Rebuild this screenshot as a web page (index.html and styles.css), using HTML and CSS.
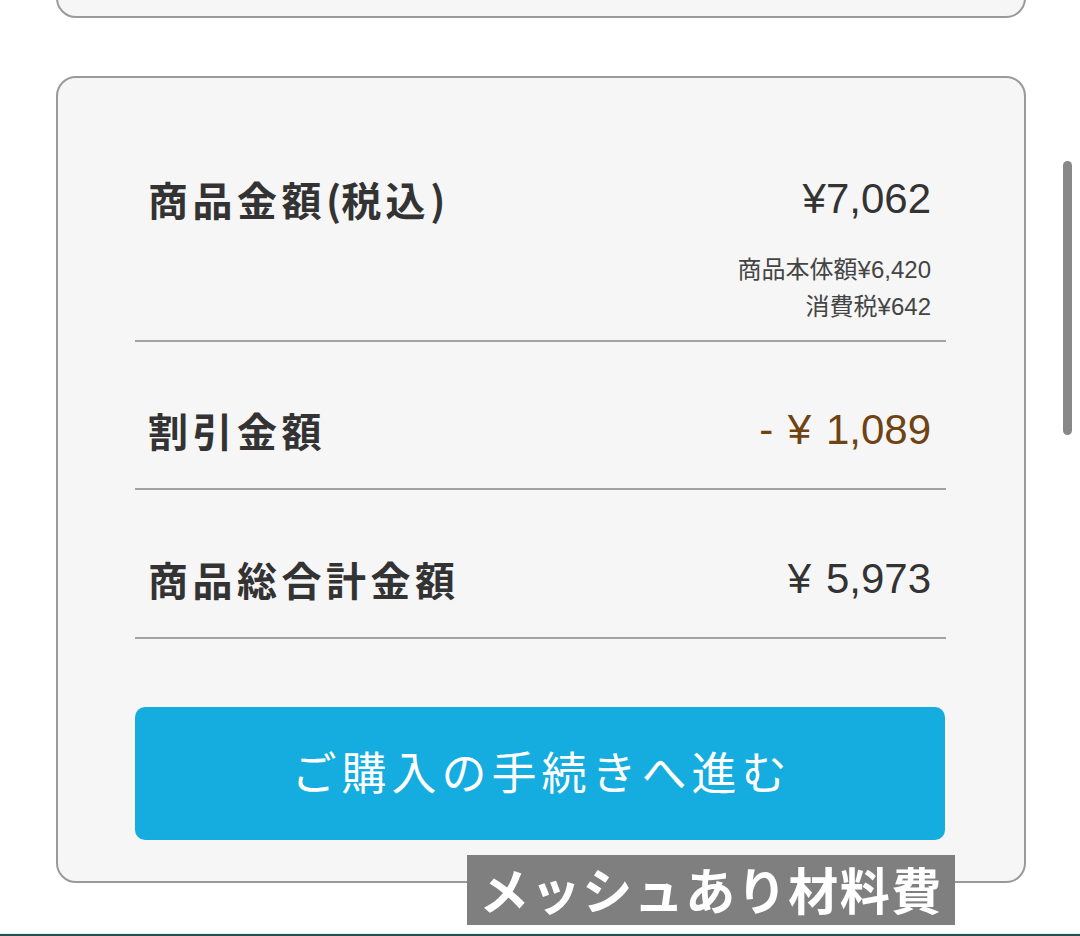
FILE: index.html
```html
<!DOCTYPE html>
<html lang="ja">
<head>
<meta charset="utf-8">
<link rel="stylesheet" href="styles.css">
</head>
<body>
<div class="page">
  <div class="card card-prev"></div>
  <div class="card summary">
    <div class="row row-first">
      <div class="line">
        <span class="label">商品金額<span class="paren">(</span>税込<span class="paren">)</span></span>
        <span class="value">¥7,062</span>
      </div>
      <div class="sub">
        <div>商品本体額¥6,420</div>
        <div>消費税¥642</div>
      </div>
    </div>
    <div class="row row-second">
      <div class="line">
        <span class="label">割引金額</span>
        <span class="value discount">- ¥ 1,089</span>
      </div>
    </div>
    <div class="row row-third">
      <div class="line">
        <span class="label">商品総合計金額</span>
        <span class="value">¥ 5,973</span>
      </div>
    </div>
    <button class="cta">ご購入の手続きへ進む</button>
  </div>
</div>
<div class="caption">メッシュあり材料費</div>
<div class="scrollbar"></div>
<div class="bottom-edge"></div>
</body>
</html>
```

FILE: styles.css
```css
html, body {
  margin: 0;
  padding: 0;
  background: #ffffff;
}
body {
  font-family: "Noto Sans CJK JP", "Liberation Sans", sans-serif;
  color: #333333;
  width: 1080px;
  height: 936px;
  overflow: hidden;
  position: relative;
}
.page {
  padding-left: 56px;
  width: 970px;
}
.card {
  box-sizing: border-box;
  width: 970px;
  background: #f6f6f6;
  border: 2px solid #9a9a9a;
  border-radius: 20px;
}
.card-prev {
  height: 60px;
  margin-top: -42px;
}
.summary {
  margin-top: 58px;
  height: 807px;
  padding: 0 78px 0 77px;
}
.row {
  border-bottom: 2px solid #a3a3a3;
}
.row-first {
  padding-top: 88px;
  padding-bottom: 15px;
}
.row-second {
  padding-top: 55px;
  padding-bottom: 25px;
}
.row-third {
  padding-top: 56px;
  padding-bottom: 25px;
}
.line {
  display: flex;
  justify-content: space-between;
  align-items: center;
  height: 66px;
}
.label {
  font-family: "Noto Sans CJK JP", sans-serif;
  font-weight: 700;
  font-size: 40px;
  letter-spacing: 4.5px;
  line-height: 66px;
  padding-left: 13px;
  color: #333333;
}
.paren {
  letter-spacing: 0;
}
.value {
  font-family: "Liberation Sans", "Noto Sans CJK JP", sans-serif;
  font-size: 42px;
  line-height: 66px;
  color: #333333;
  padding-right: 15px;
  word-spacing: 3px;
}
.value.discount {
  color: #6f4313;
}
.sub {
  margin-top: 19px;
  text-align: right;
  padding-right: 15px;
  font-family: "Liberation Sans", "Noto Sans CJK JP", sans-serif;
  font-size: 24px;
  line-height: 37px;
  color: #444444;
}
.cta {
  display: block;
  box-sizing: border-box;
  width: 810px;
  height: 133px;
  margin-top: 68px;
  border: none;
  border-radius: 10px;
  background: #15ade0;
  color: #ffffff;
  font-family: "Noto Sans CJK JP", sans-serif;
  font-weight: 400;
  font-size: 45px;
  letter-spacing: 5px;
  padding: 0 0 6px 3px;
}
.caption {
  position: absolute;
  left: 467px;
  top: 855px;
  width: 488px;
  height: 70px;
  background: #7f7f7f;
  color: #ffffff;
  font-family: "Noto Sans CJK JP", sans-serif;
  font-weight: 700;
  font-size: 50px;
  line-height: 66px;
  text-align: center;
  letter-spacing: 1.5px;
}
.scrollbar {
  position: absolute;
  left: 1063px;
  top: 161px;
  width: 9px;
  height: 274px;
  border-radius: 5px;
  background: #888888;
}
.bottom-edge {
  position: absolute;
  left: 0;
  bottom: 0;
  width: 1080px;
  height: 3px;
  background: #23504f;
  border-top: 1px solid #d8f3f1;
  box-sizing: border-box;
}
```
